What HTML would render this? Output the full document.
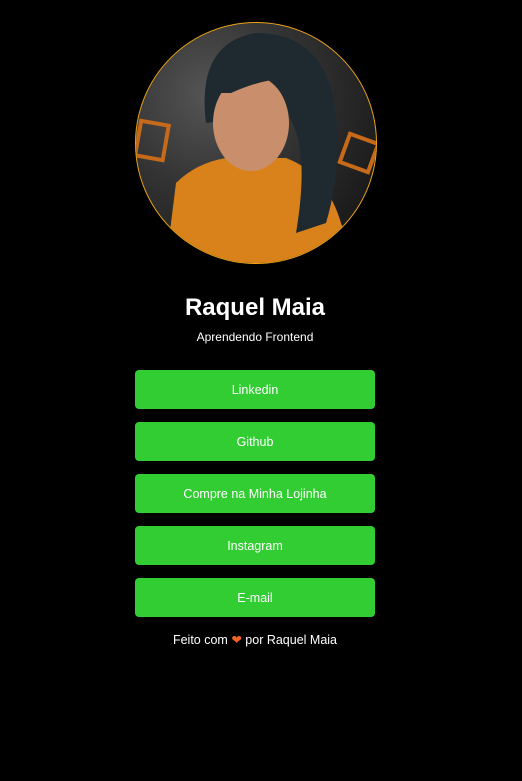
<!DOCTYPE html>
<html><head><style>
html,body{margin:0;background:#000;width:522px;height:781px;overflow:hidden;font-family:"Liberation Sans","DejaVu Sans",sans-serif;color:#fff}
.av{position:absolute;left:135px;top:22px;width:240px;height:240px;border-radius:50%;border:1px solid #e8a317;overflow:hidden;background:radial-gradient(circle at 30% 30%,#555 0,#333 40%,#1a1a1a 80%)}
h1{position:absolute;top:294px;left:0;width:510px;text-align:center;margin:0;font-size:24px;font-weight:bold}
.sub{position:absolute;top:330px;width:510px;text-align:center;font-size:12px}
.b{position:absolute;left:135px;width:240px;height:39px;background:#32cd32;border-radius:4px;text-align:center;line-height:41px;font-size:12.5px}
.f{position:absolute;top:632px;width:510px;text-align:center;font-size:12.5px}
</style></head><body>
<div class="av">
<svg width="240" height="240" viewBox="0 0 240 240">
<path d="M40 160 Q60 140 90 135 L150 135 Q190 150 205 200 L220 240 L30 240 Z" fill="#d9821c"/>
<path d="M70 100 Q60 20 120 10 Q190 10 200 90 Q205 150 190 200 L160 210 Q175 120 150 90 Z" fill="#1e2a30"/>
<ellipse cx="115" cy="100" rx="38" ry="48" fill="#c98f6c"/>
<path d="M80 70 Q110 20 160 60 Q140 50 95 70 Z" fill="#1e2a30"/>
<rect x="2" y="100" width="28" height="35" fill="none" stroke="#c66a1a" stroke-width="4" transform="rotate(10 16 117)"/>
<rect x="208" y="115" width="30" height="30" fill="none" stroke="#c66a1a" stroke-width="4" transform="rotate(20 223 130)"/>
</svg>
</div>
<h1>Raquel Maia</h1>
<div class="sub">Aprendendo Frontend</div>
<div class="b" style="top:370px">Linkedin</div>
<div class="b" style="top:422px">Github</div>
<div class="b" style="top:474px">Compre na Minha Lojinha</div>
<div class="b" style="top:526px">Instagram</div>
<div class="b" style="top:578px">E-mail</div>
<div class="f">Feito com <span style="color:#f26522">❤</span> por Raquel Maia</div>
</body></html>
